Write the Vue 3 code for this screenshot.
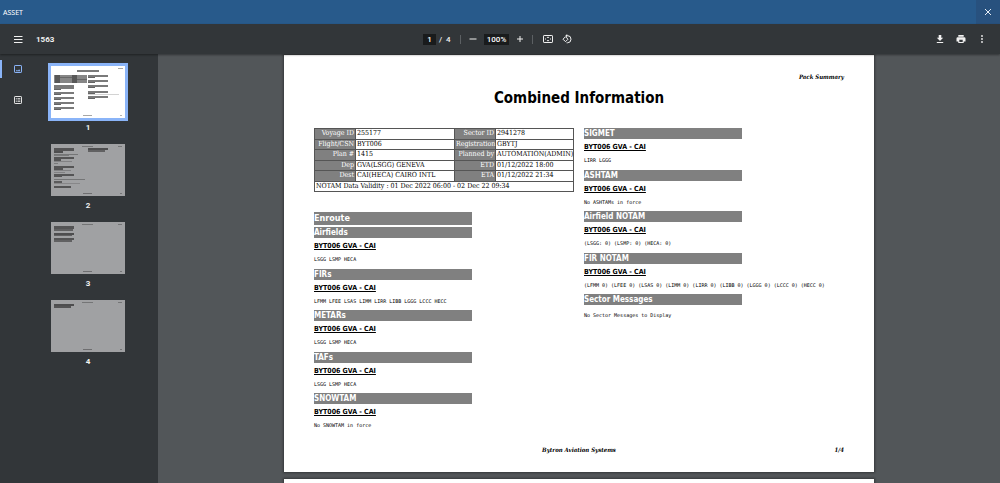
<script setup>
import { ref } from 'vue'

const page = ref('1')
const zoom = ref('100%')

const flight = 'BYT006 GVA - CAI'

const details = [
  ['Voyage ID', '255177', 'Sector ID', '2941278'],
  ['Flight/CSN', 'BYT006', 'Registration', 'GBYTJ'],
  ['Plan #', '1415', 'Planned by', 'AUTOMATION(ADMIN)'],
  ['Dep', 'GVA(LSGG) GENEVA', 'ETD', '01/12/2022 18:00'],
  ['Dest', 'CAI(HECA) CAIRO INTL', 'ETA', '01/12/2022 21:34']
]

const leftSections = [
  { title: 'Airfields', flight, text: 'LSGG LSMP HECA' },
  { title: 'FIRs', flight, text: 'LFMM LFEE LSAS LIMM LIRR LIBB LGGG LCCC HECC' },
  { title: 'METARs', flight, text: 'LSGG LSMP HECA' },
  { title: 'TAFs', flight, text: 'LSGG LSMP HECA' },
  { title: 'SNOWTAM', flight, text: 'No SNOWTAM in force' }
]

const rightSections = [
  { title: 'SIGMET', flight, text: 'LIRR LGGG' },
  { title: 'ASHTAM', flight, text: 'No ASHTAMs in force' },
  { title: 'Airfield NOTAM', flight, text: '(LSGG: 0) (LSMP: 0) (HECA: 0)' },
  {
    title: 'FIR NOTAM',
    flight,
    text: '(LFMM 0) (LFEE 0) (LSAS 0) (LIMM 0) (LIRR 0) (LIBB 0) (LGGG 0) (LCCC 0) (HECC 0)'
  },
  { title: 'Sector Messages', text: 'No Sector Messages to Display' }
]

// Miniature page content: [x, y, width, height, opacity]
const bar = (x, y, w = 20) => [[x, y, w, 2, 0.6], [x, y + 2, 7, 1, 0.7]]
const edges = [[31, 2, 11, 1, 0.35], [67, 2, 4, 1, 0.35], [32, 49, 9, 1, 0.4], [69, 49, 2, 1, 0.35]]
const thumbs = [
  {
    n: 1,
    marks: [
      [26, 4, 22, 2, 0.6], [67, 2, 5, 1, 0.4],
      [3, 9, 33, 8, 0.55], [4, 9, 5, 8, 0.45], [21, 9, 5, 8, 0.45], [9, 11, 12, 1, 0.3], [26, 13, 10, 1, 0.3],
      [3, 19, 20, 4, 0.6], [3, 23, 7, 1, 0.7],
      ...bar(3, 26), ...bar(3, 31), ...bar(3, 36), ...bar(3, 41),
      ...bar(37, 9), ...bar(37, 14), ...bar(37, 19), ...bar(37, 25), [37, 28, 31, 1, 0.2], ...bar(37, 30),
      [32, 49, 9, 1, 0.4], [69, 49, 2, 1, 0.35]
    ]
  },
  {
    n: 2,
    marks: [
      ...edges,
      [3, 4, 20, 3, 0.6], [3, 7, 9, 2, 0.65], [3, 10, 24, 1, 0.35], [3, 11, 15, 1, 0.3],
      [3, 13, 20, 2, 0.6], [3, 15, 7, 2, 0.6], [3, 17, 18, 1, 0.25], [3, 19, 4, 1, 0.3],
      [3, 22, 20, 2, 0.6], [3, 24, 9, 2, 0.6], [3, 26, 17, 1, 0.25], [3, 28, 11, 1, 0.25],
      [3, 30, 20, 2, 0.6], [3, 32, 8, 1, 0.6], [3, 35, 31, 1, 0.35],
      [3, 37, 8, 2, 0.55], [3, 39, 26, 1, 0.2], [3, 42, 17, 2, 0.6],
      [37, 4, 20, 2, 0.65], [37, 6, 17, 2, 0.5]
    ]
  },
  {
    n: 3,
    marks: [
      ...edges,
      [3, 4, 20, 3, 0.6], [3, 7, 19, 2, 0.5], [3, 11, 20, 2, 0.65],
      [3, 13, 18, 1, 0.5], [3, 16, 20, 2, 0.6], [3, 18, 18, 2, 0.5]
    ]
  },
  { n: 4, marks: [...edges, [3, 4, 20, 2, 0.65], [3, 6, 17, 2, 0.6]] }
]
</script>

<template>
  <div class="app">
    <header class="titlebar">
      <span>ASSET</span>
      <button class="close" aria-label="Close">
        <svg viewBox="0 0 8 8" width="8" height="8"><path d="M1 1l6 6M7 1l-6 6" stroke="#e6edf5" /></svg>
      </button>
    </header>

    <div class="toolbar">
      <div class="tools start">
        <button class="icon" aria-label="Menu">
          <svg viewBox="0 0 10 10" width="10" height="10"><path d="M1 2.500h8.500M1 5.500h8.500M1 8.500h8.500" stroke="#f1f1f1" /></svg>
        </button>
        <span class="filename">1563</span>
      </div>

      <div class="tools middle">
        <input v-model="page" class="page-input" aria-label="Page number" />
        <span class="total">/&nbsp; 4</span>
        <i class="rule"></i>
        <button class="icon" aria-label="Zoom out">
          <svg viewBox="0 0 10 10" width="10" height="10"><path d="M1.500 5h7" stroke="#f1f1f1" /></svg>
        </button>
        <input v-model="zoom" class="zoom-input" aria-label="Zoom level" />
        <button class="icon" aria-label="Zoom in">
          <svg viewBox="0 0 10 10" width="10" height="10"><path d="M2 5h6M5 2v6" stroke="#f1f1f1" /></svg>
        </button>
        <i class="rule"></i>
        <button class="icon" aria-label="Fit to page">
          <svg viewBox="0 0 10 10" width="10" height="10" fill="none">
            <rect x=".5" y="1.500" width="9" height="7" rx=".6" stroke="#f1f1f1" />
            <path d="M5 2.500l1.300 1.600H3.700zM5 7.500l1.300-1.600H3.700zM2 5l1-1v2zM8 5L7 4v2z" fill="#f1f1f1" />
          </svg>
        </button>
        <button class="icon rotate" aria-label="Rotate">
          <svg viewBox="0 0 10 10" width="10" height="10" fill="none" stroke="#f1f1f1">
            <path d="M3.500 2.700L6 5.200 3.500 7.700 1 5.200z" />
            <path d="M4.500 1.600h.9a3.600 3.600 0 0 1 0 7.200H4.600" />
            <path d="M5.200 0v3.400L3.300 1.700z" fill="#f1f1f1" stroke="none" />
          </svg>
        </button>
      </div>

      <div class="tools end">
        <button class="icon" aria-label="Download">
          <svg viewBox="0 0 10 10" width="10" height="10" fill="#f1f1f1"><path d="M3.700 1h2.600v2.700h1.900L5 6.900 1.800 3.700h1.900zM1.800 7.900h6.400V9H1.800z" /></svg>
        </button>
        <button class="icon" aria-label="Print">
          <svg viewBox="0 0 10 10" width="10" height="10" fill="#f1f1f1">
            <path d="M2.300 1h5.400v1.700H2.300zM1.800 3.200h6.400A1.300 1.300 0 0 1 9.500 4.500v3H7.700V9H2.300V7.500H.5v-3a1.300 1.300 0 0 1 1.300-1.300zM3.300 5.700V8h3.400V5.700z" fill-rule="evenodd" />
          </svg>
        </button>
        <button class="icon" aria-label="More actions">
          <svg viewBox="0 0 10 10" width="10" height="10" fill="#f1f1f1"><circle cx="5" cy="2" r=".9" /><circle cx="5" cy="5" r=".9" /><circle cx="5" cy="8" r=".9" /></svg>
        </button>
      </div>
    </div>

    <div class="body">
      <aside class="sidebar">
        <nav class="modes">
          <button class="mode active" aria-label="Thumbnails">
            <svg viewBox="0 0 8 8" width="8" height="8" fill="none">
              <rect x=".5" y=".5" width="7" height="7" rx=".6" stroke="#8ab4f8" />
              <path d="M1.600 6.300l1.300-1.600 1 1.100 1.200-1.500 1.400 2z" fill="#8ab4f8" />
            </svg>
          </button>
          <button class="mode" aria-label="Document outline">
            <svg viewBox="0 0 8 8" width="8" height="8" fill="none" stroke="#e3e3e3">
              <rect x=".5" y=".5" width="7" height="7" rx=".6" />
              <path d="M1.800 2.500h1M3.500 2.500h2.800M1.800 4h1M3.500 4h2.800M1.800 5.500h1M3.500 5.500h2.800" stroke-width=".8" />
            </svg>
          </button>
        </nav>
        <div class="thumbs">
          <button v-for="t in thumbs" :key="t.n" class="thumb" :class="{ current: t.n === 1 }" :aria-label="'Page ' + t.n">
            <svg class="mini" viewBox="0 0 74 52">
              <rect v-for="(m, i) in t.marks" :key="i" :x="m[0]" :y="m[1]" :width="m[2]" :height="m[3]" :opacity="m[4]" fill="#222" />
            </svg>
            <span>{{ t.n }}</span>
          </button>
        </div>
      </aside>

      <main class="viewer">
        <article class="page">
          <p class="running">Pack Summary</p>
          <h1>Combined Information</h1>
          <div class="columns">
            <div class="left">
              <table>
                <colgroup><col class="c1" /><col class="c2" /><col class="c3" /><col class="c4" /></colgroup>
                <tbody>
                  <tr v-for="r in details" :key="r[0]">
                    <th scope="row">{{ r[0] }}</th><td>{{ r[1] }}</td>
                    <th scope="row">{{ r[2] }}</th><td>{{ r[3] }}</td>
                  </tr>
                  <tr><td colspan="4">NOTAM Data Validity : 01 Dec 2022 06:00 - 02 Dec 22 09:34</td></tr>
                </tbody>
              </table>
              <h2>Enroute</h2>
              <div class="sections">
                <section v-for="s in leftSections" :key="s.title">
                  <h3>{{ s.title }}</h3>
                  <h4>{{ s.flight }}</h4>
                  <p>{{ s.text }}</p>
                </section>
              </div>
            </div>
            <div class="sections">
              <section v-for="s in rightSections" :key="s.title">
                <h3>{{ s.title }}</h3>
                <h4 v-if="s.flight">{{ s.flight }}</h4>
                <p>{{ s.text }}</p>
              </section>
            </div>
          </div>
          <footer>
            <span></span><span>Bytron Aviation Systems</span><span class="folio">1/4</span>
          </footer>
        </article>
        <article class="page next"></article>
      </main>
    </div>
  </div>
</template>

<style>
body { background: #525659; }
</style>

<style scoped>
* { box-sizing: border-box; }
h1, h2, h3, h4, p { margin: 0; }
button { border: 0; padding: 0; background: none; color: inherit; font: inherit; }
svg { display: block; }

.app {
  height: 100vh;
  overflow: hidden;
  display: flex;
  flex-direction: column;
  font-family: Roboto, "Liberation Sans", sans-serif;
}

.titlebar {
  height: 24px;
  flex: none;
  display: flex;
  align-items: center;
  justify-content: space-between;
  padding-left: 3px;
  background: #285a8b;
  color: #fff;
  font: 7px "Noto Sans", sans-serif;
}
.close {
  width: 24px;
  height: 24px;
  display: grid;
  place-items: center;
  background: #28517e;
}

.toolbar {
  position: relative;
  height: 30px;
  flex: none;
  display: grid;
  grid-template-columns: 1fr auto 1fr;
  align-items: center;
  padding: 0 13px;
  background: #323639;
  color: #f1f1f1;
  font-size: 8px;
  font-weight: 500;
  box-shadow: 0 1px 2px rgba(0, 0, 0, 0.4);
}
.tools { display: flex; align-items: center; }
.middle { padding-right: 5px; }
.icon { width: 10px; height: 10px; }
.filename { margin-left: 13px; font-weight: 700; }
.end { justify-content: flex-end; gap: 11px; }
.toolbar input {
  height: 11px;
  border: 0;
  padding: 0;
  background: #191b1c;
  color: #fff;
  font: 500 8px Roboto, sans-serif;
  text-align: center;
}
.page-input { width: 13px; }
.zoom-input { width: 25px; margin: 0 6px; }
.total { width: 13px; margin: 0 8px 0 3px; white-space: nowrap; }
.rule { width: 1px; height: 9px; margin-right: 7px; background: #5c6063; }
.zoom-input + .icon + .rule { margin: 0 10px 0 7px; }
.rotate { margin-left: 9px; }

.body { flex: 1; min-height: 0; display: flex; }

.sidebar { width: 158px; flex: none; display: flex; background: #323639; }
.modes { width: 36px; padding-top: 6px; display: flex; flex-direction: column; gap: 13px; }
.mode { height: 18px; display: grid; place-items: center; border-left: 2px solid transparent; }
.mode { padding-right: 2px; }
.mode.active { border-color: #8ab4f8; }

.thumbs { width: 80px; margin-left: 12px; padding-top: 9px; display: flex; flex-direction: column; }
.thumb { width: 80px; height: 78px; padding: 0; flex: none; display: flex; flex-direction: column; align-items: center; color: #f1f1f1; font-size: 8px; font-weight: 700; line-height: 14px; }
.mini { width: 80px; height: 58px; border: 3px solid transparent; background: #a0a1a3 padding-box; }
.current .mini { border-color: #8ab4f8; background-color: #fff; }

.viewer {
  flex: 1;
  min-width: 0;
  overflow: hidden;
  display: flex;
  flex-direction: column;
  align-items: center;
  gap: 7px;
  padding-top: 1px;
  background: #525659;
}
.page {
  width: 590px;
  max-width: 100%;
  min-height: 417px;
  flex: none;
  display: flex;
  flex-direction: column;
  padding: 16px 30px;
  background: #fff;
  color: #000;
  box-shadow: 0 0 2px 1px rgba(0, 0, 0, 0.35);
}
.running, footer { font: italic 700 6px/12px "DejaVu Serif Condensed", "DejaVu Serif", serif; }
.running { text-align: right; }
h1 {
  margin-top: 4px;
  text-align: center;
  font: 700 15px/22px "DejaVu Sans Condensed", "DejaVu Sans", sans-serif;
}
.columns { display: grid; grid-template-columns: 260px 1fr; gap: 10px; margin-top: 19px; align-items: start; }

table {
  width: 100%;
  height: 64px;
  table-layout: fixed;
  border-collapse: collapse;
  font: 7px/9px "DejaVu Serif Condensed", "DejaVu Serif", serif;
}
.c1, .c3 { width: 41px; }
.c2 { width: 99px; }
td, th { padding: 0 1px; border: 1px solid #555; white-space: nowrap; }
td { text-align: left; }
th { background: #808080; color: #fff; font-weight: 400; text-align: right; }

h2, h3, h4 { font-family: "DejaVu Sans Condensed", "DejaVu Sans", sans-serif; font-weight: 700; }
h2, h3 { width: 158px; background: #808080; color: #fff; }
h2 { margin: 20px 0 2px; font-size: 9px; line-height: 13px; }
h3 { font-size: 8px; line-height: 11px; }
h4 { margin-top: 3px; font-size: 7px; line-height: 10px; text-decoration: underline; }
.sections { min-height: 208px; display: grid; grid-auto-rows: 1fr; }
.sections p { margin-top: 4px; font: 5px/8px "DejaVu Sans Mono", monospace; white-space: nowrap; }
h3 + p { padding-top: 2px; }

footer { margin-top: auto; display: grid; grid-template-columns: 1fr auto 1fr; }
.folio { text-align: right; }
</style>
